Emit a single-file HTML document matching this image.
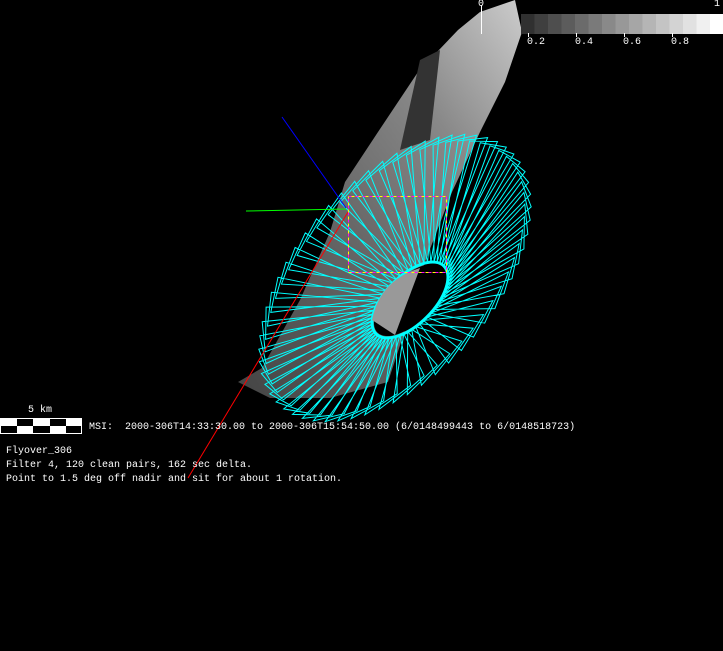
<!DOCTYPE html>
<html><head><style>
html,body{margin:0;padding:0;background:#000;width:723px;height:651px;overflow:hidden}
svg{position:absolute;left:0;top:0}
.t{position:absolute;color:#fff;font-family:"Liberation Mono",monospace;font-size:10px;line-height:14px;white-space:pre}
</style></head><body>
<svg id="s" width="723" height="651" xmlns="http://www.w3.org/2000/svg">
<defs>
<linearGradient id="g" x1="0" y1="1" x2="1" y2="0">
<stop offset="0" stop-color="#444"/><stop offset="0.4" stop-color="#666"/><stop offset="0.7" stop-color="#888"/><stop offset="1" stop-color="#ccc"/>
</linearGradient>
</defs>
<polygon points="480,12 515,0 522,32 505,82 480,132 452,192 425,262 405,330 388,382 330,398 270,398 238,382 262,368 300,300 330,232 345,182 378,132 418,72 458,30" fill="url(#g)"/>
<polygon points="420,60 440,50 430,140 400,150" fill="#333"/>
<g id="cy" stroke="#0ff" stroke-width="1" fill="none"></g>
<ellipse cx="410" cy="300" rx="46" ry="22" transform="rotate(-45 410 300)" fill="#000"/>
<path d="M372,320 Q380,280 420,268 L395,335 Z" fill="#999"/>
<line x1="282" y1="117" x2="346" y2="208" stroke="#00f"/>
<line x1="246" y1="211" x2="346" y2="209" stroke="#0f0"/>
<line x1="348" y1="212" x2="188" y2="478" stroke="#f00"/>
<rect x="348.5" y="196.5" width="98" height="76" fill="none" stroke="#f0f" stroke-dasharray="4,3"/>
<rect x="348.5" y="196.5" width="98" height="76" fill="none" stroke="#ff0" stroke-dasharray="3,4" stroke-dashoffset="4"/>
<g id="cb"></g>
<line x1="481.5" y1="5" x2="481.5" y2="34" stroke="#fff"/>
<g stroke="#fff"><line x1="528.5" y1="33" x2="528.5" y2="37"/><line x1="576.5" y1="33" x2="576.5" y2="37"/><line x1="624.5" y1="33" x2="624.5" y2="37"/><line x1="672.5" y1="33" x2="672.5" y2="37"/></g>
<rect x="0.5" y="418.5" width="81" height="15" fill="#fff" stroke="#fff"/>
<g fill="#000"><rect x="17" y="419" width="16" height="7"/><rect x="50" y="419" width="16" height="7"/><rect x="1" y="426" width="16" height="7"/><rect x="33" y="426" width="17" height="7"/><rect x="66" y="426" width="15" height="7"/></g>
</svg>
<div class="t" style="left:478px;top:-2px">0</div>
<div class="t" style="left:714px;top:-2px">1</div>
<div class="t" style="left:527px;top:36px">0.2</div>
<div class="t" style="left:575px;top:36px">0.4</div>
<div class="t" style="left:623px;top:36px">0.6</div>
<div class="t" style="left:671px;top:36px">0.8</div>
<div class="t" style="left:28px;top:404px">5 km</div>
<div class="t" style="left:89px;top:421px">MSI:  2000-306T14:33:30.00 to 2000-306T15:54:50.00 (6/0148499443 to 6/0148518723)</div>
<div class="t" style="left:6px;top:445px">Flyover_306
Filter 4, 120 clean pairs, 162 sec delta.
Point to 1.5 deg off nadir and sit for about 1 rotation.</div>
<script>
var NS="http://www.w3.org/2000/svg";
var cb=document.getElementById("cb");
for(var i=0;i<15;i++){var r=document.createElementNS(NS,"rect");var v=Math.round(48+i*(207/14));
r.setAttribute("x",521+i*13.5);r.setAttribute("y",14);r.setAttribute("width",14);r.setAttribute("height",20);
r.setAttribute("fill","rgb("+v+","+v+","+v+")");cb.appendChild(r);}
function ell(cx,cy,a,b,rot,t){var c=Math.cos(rot),s=Math.sin(rot);var x=a*Math.cos(t),y=b*Math.sin(t);return [cx+x*c-y*s,cy+x*s+y*c];}
var g=document.getElementById("cy");var d="";
var R=-48*Math.PI/180,Ri=-45*Math.PI/180;
function f(p){return p[0].toFixed(1)+","+p[1].toFixed(1);}
for(var k=0;k<60;k++){var t=k/60*2*Math.PI;
var p=ell(410,300,48,24,Ri,t);
var o1=ell(395,278,165,92,R,t-0.3),o2=ell(395,278,172,98,R,t-0.05);
d+="M"+f(p)+"L"+f(o1)+"L"+f(o2)+"Z";}
var pa=document.createElementNS(NS,"path");pa.setAttribute("d",d);g.appendChild(pa);
var e=document.createElementNS(NS,"ellipse");e.setAttribute("cx",410);e.setAttribute("cy",300);e.setAttribute("rx",48);e.setAttribute("ry",24);e.setAttribute("transform","rotate(-45 410 300)");e.setAttribute("stroke-width","3");g.appendChild(e);
</script>
</body></html>
